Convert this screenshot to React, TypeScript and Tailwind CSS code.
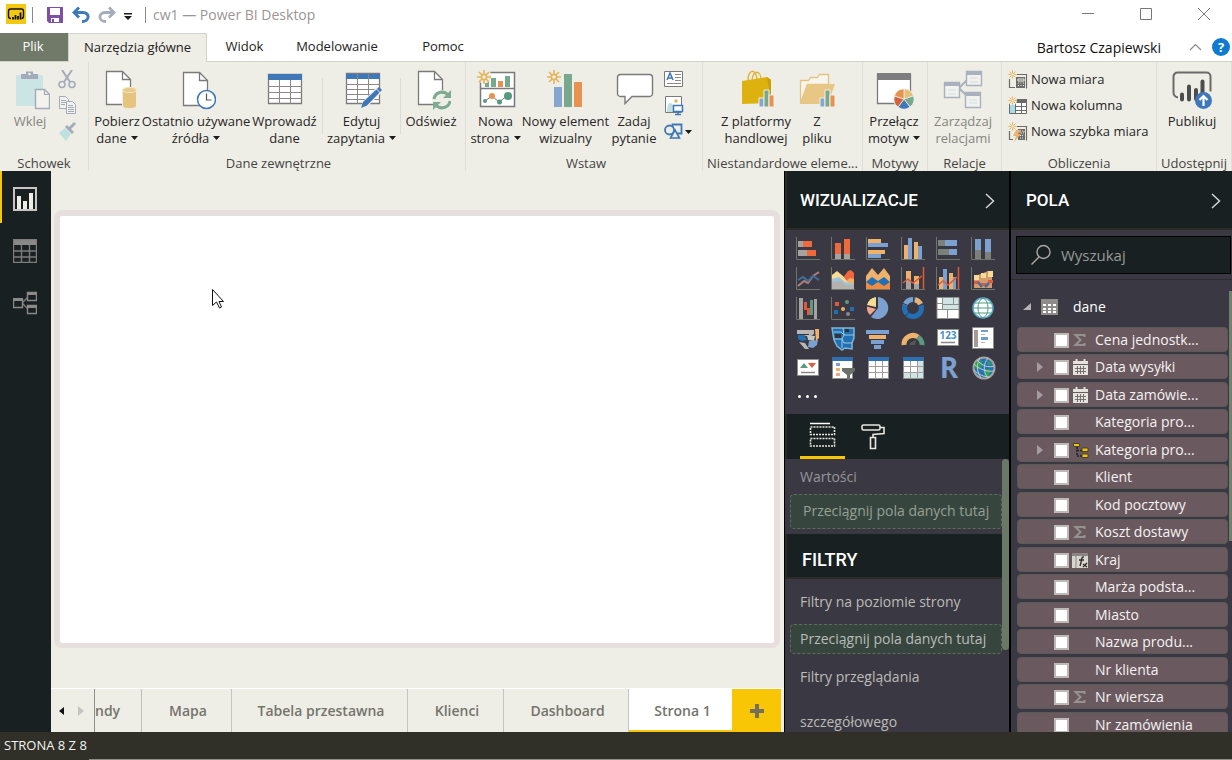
import React, { useState } from "react";

type IconProps = { children: React.ReactNode };

const BigIcon = ({ children }: IconProps) => (
  <svg width="40" height="40" viewBox="0 0 40 40" fill="none" className="mx-auto block shrink-0">
    {children}
  </svg>
);

const SmallIcon = ({ children }: IconProps) => (
  <svg width="20" height="20" viewBox="0 0 20 20" fill="none" className="shrink-0">
    {children}
  </svg>
);

const Caret = () => (
  <svg width="7" height="4" viewBox="0 0 7 4" className="mb-[3px] ml-1 inline-block">
    <path d="M0 0h7L3.5 4z" fill="#1c1c1c" />
  </svg>
);

const Star = ({ x, y }: { x: number; y: number }) => (
  <g transform={`translate(${x} ${y})`} stroke="#e3b55c" strokeWidth="1.6">
    <path d="M0-7V-3M0 3V7M-7 0H-3M3 0H7M-5-5L-2-2M2 2L5 5M5-5L2-2M-2 2L-5 5" />
    <circle r="2.6" fill="#f3efe2" />
  </g>
);

/* ribbon icons */

const PasteIcon = () => (
  <BigIcon>
    <path d="M6 5h27v31H6z" fill="#cbe5e4" />
    <path d="M11 4h5V1.500h7V4h5v5H11z" fill="#a3abba" />
    <circle cx="19.500" cy="4" r="1.300" fill="#efeee6" />
    <path d="M25.500 19.500h9l5 5v14h-14z" fill="#f3f2ec" stroke="#a3abba" strokeWidth="1.400" />
    <path d="M34.500 19.500v5h5" stroke="#a3abba" strokeWidth="1.200" />
  </BigIcon>
);

const GetDataIcon = () => (
  <BigIcon>
    <path d="M9.500 1.500h16l8 8v25h-24z" fill="#fff" stroke="#7a7a7a" strokeWidth="1.300" />
    <path d="M25.500 1.500v8h8" stroke="#7a7a7a" strokeWidth="1.300" />
    <path d="M25.500 20v16c0 3.500 14 3.500 14 0V20z" fill="#e6c37f" stroke="#efeee6" />
    <ellipse cx="32.500" cy="20" rx="7" ry="2.600" fill="#e9c98b" stroke="#f6e7c5" />
  </BigIcon>
);

const RecentIcon = () => (
  <BigIcon>
    <path d="M7.500 2.500h16l8 8v25h-24z" fill="#fff" stroke="#7a7a7a" strokeWidth="1.300" />
    <path d="M23.500 2.500v8h8" stroke="#7a7a7a" strokeWidth="1.300" />
    <circle cx="30.500" cy="29.500" r="9" fill="#fff" stroke="#3f7ab8" strokeWidth="1.500" />
    <path d="M30.500 23.500v6.500h5" stroke="#555" strokeWidth="1.200" />
  </BigIcon>
);

const TableIcon = () => (
  <BigIcon>
    <path d="M3.500 4.500h33v29h-33z" fill="#fff" stroke="#7a7a7a" strokeWidth="1.300" />
    <path d="M3 4h34v6H3z" fill="#3f78b8" />
    <path d="M14.500 10v24M25.500 10v24M3 16.500h34M3 22.500h34M3 28.500h34" stroke="#8d8787" />
  </BigIcon>
);

const EditQueriesIcon = () => (
  <BigIcon>
    <path d="M4.500 3.500h33v30h-33z" fill="#fff" stroke="#7a7a7a" strokeWidth="1.300" />
    <path d="M4 4h34v5H4z" fill="#3f78b8" />
    <path d="M15.500 4v30M26.500 4v30M4 14.500h34M4 19.500h34M4 24.500h34M4 29.500h34" stroke="#8d8787" />
    <path d="M38 19L22 35" stroke="#efeee6" strokeWidth="7" />
    <path d="M19 38l2-6L37 17l3 3L25 35.500z" fill="#3f78b8" />
    <path d="M34 18.500l4.500 4.500" stroke="#efeee6" />
  </BigIcon>
);

const RefreshIcon = () => (
  <BigIcon>
    <path d="M7.500 1.500h16l8 8v25h-24z" fill="#fff" stroke="#7a7a7a" strokeWidth="1.300" />
    <path d="M23.500 1.500v8h8" stroke="#7a7a7a" strokeWidth="1.300" />
    <circle cx="31" cy="30" r="10" fill="#efeee6" />
    <path d="M23 29a8 8 0 0 1 14-4M39 31a8 8 0 0 1-14 4" stroke="#7cab92" strokeWidth="3" />
    <path d="M40 20v8h-8zM22 40v-8h8z" fill="#7cab92" />
  </BigIcon>
);

const NewPageIcon = () => (
  <BigIcon>
    <path d="M4.500 2.500h34v34h-34z" fill="#fff" stroke="#7a7a7a" strokeWidth="1.500" />
    <path d="M4 18.500h35" stroke="#7a7a7a" strokeWidth="1.500" />
    <path d="M9 12h4v5H9zM15 8h5v9h-5zM29 6h5v11h-5z" fill="#78a88e" />
    <path d="M22 11h5v6h-5z" fill="#e8924f" />
    <path d="M9 31l7-5 7 6 8-6" stroke="#777" />
    <circle cx="9" cy="31" r="2" fill="#559a7e" />
    <circle cx="16" cy="26" r="3" fill="#e8924f" />
    <circle cx="23.500" cy="32" r="2.500" fill="#559a7e" />
    <circle cx="32" cy="26" r="4" fill="#559a7e" />
    <circle cx="8" cy="6" r="7.500" fill="#efeee6" />
    <Star x={8} y={7} />
  </BigIcon>
);

const NewVisualIcon = () => (
  <BigIcon>
    <path d="M8 17h8v20H8z" fill="#86a5cf" />
    <path d="M18 4h8v33h-8z" fill="#78a88e" />
    <path d="M28 12h8v25h-8z" fill="#e8924f" />
    <Star x={8} y={7} />
  </BigIcon>
);

const AskIcon = () => (
  <BigIcon>
    <path
      d="M6.500 4.500h29a3 3 0 0 1 3 3v16a3 3 0 0 1-3 3H18l-7 7v-7H6.500a3 3 0 0 1-3-3v-16a3 3 0 0 1 3-3z"
      fill="#fff"
      stroke="#7a7a7a"
      strokeWidth="1.400"
    />
  </BigIcon>
);

const MiniBars = () => (
  <>
    <path d="M23 28h5v9h-5z" fill="#86a5cf" stroke="#efeee6" />
    <path d="M28 20h5v17h-5z" fill="#78a88e" stroke="#efeee6" />
    <path d="M33 25h5v12h-5z" fill="#e8924f" stroke="#efeee6" />
  </>
);

const StoreIcon = () => (
  <BigIcon>
    <path d="M12 11c0-13 9-13 9 0M16 11c1-12 9-11 9-1" stroke="#dcb53c" strokeWidth="1.400" />
    <path d="M6 11l25-4 4 3v23L6 34z" fill="#ddb20f" />
    <path d="M31 7l4 3v20z" fill="#c99e0b" />
    <MiniBars />
  </BigIcon>
);

const FileIcon = () => (
  <BigIcon>
    <path d="M3.500 33V10.500h8l2-3h7l2-3h9v10h-21z" fill="#f8f5ec" stroke="#e6c385" strokeWidth="1.300" />
    <path d="M10 14h28l-7 20H3z" fill="#e8c684" />
    <MiniBars />
  </BigIcon>
);

const ThemeIcon = () => (
  <BigIcon>
    <path d="M3.500 4.500h33v29h-33z" fill="#fff" stroke="#7a7a7a" strokeWidth="1.300" />
    <path d="M3 3h34v7H3z" fill="#7d7d7d" />
    <circle cx="30" cy="29" r="10.500" fill="#efeee6" />
    <g transform="translate(30 29)" stroke="#efeee6" strokeWidth=".8">
      <path d="M0 0V-10A10 10 0 0 1 9.500-3z" fill="#e6bf78" />
      <path d="M0 0L9.500-3A10 10 0 0 1 6 8z" fill="#78a88e" />
      <path d="M0 0L6 8A10 10 0 0 1-6 8z" fill="#3f78b8" />
      <path d="M0 0L-6 8A10 10 0 0 1-9.500-3z" fill="#d0623f" />
      <path d="M0 0L-9.500-3A10 10 0 0 1 0-10z" fill="#e8924f" />
    </g>
  </BigIcon>
);

const RelationIcon = () => (
  <BigIcon>
    <path d="M16 18l8-8M16 18l8 8" stroke="#a9b0be" strokeWidth="2" />
    <path d="M1.500 12.500h15v15h-15zM23.500 1.500h15v14h-15zM22.500 22.500h15v15h-15z" fill="#f1f1ee" stroke="#a9b0be" strokeWidth="1.400" />
    <path d="M1 12h16v4H1zM23 1h16v4H23zM22 22h16v4H22z" fill="#a9b0be" />
    <path d="M5 20h8M5 24h8M27 8h8M27 12h8M26 30h8M26 33h8" stroke="#cfe0e2" />
  </BigIcon>
);

const PublishIcon = () => (
  <BigIcon>
    <path d="M6 27.500a5 5 0 0 1-4.500-5V6.500a4 4 0 0 1 4-4h29a4 4 0 0 1 4 4v15" stroke="#6a6a68" strokeWidth="2" />
    <path d="M10 24.500v5M17 16.500v13M24 20v9M30.500 11.500v12" stroke="#4d4d4b" strokeWidth="4" strokeLinecap="round" />
    <circle cx="31.500" cy="30.500" r="8.500" fill="#3f78b8" />
    <path d="M31.500 36v-9M27.500 30l4-4 4 4" stroke="#fff" strokeWidth="2.200" />
  </BigIcon>
);

/* icons of the visualizations list */

const Axis = () => <path d="M.5 1v22.500H24" stroke="#6d7568" />;

const vizIcons: { name: string; icon: React.ReactNode }[] = [
  {
    name: "Skumulowany wykres słupkowy",
    icon: (
      <>
        <Axis />
        <path d="M2 5h5v6H2zM2 14h9v6H2z" fill="#a6a2a0" />
        <path d="M7 5h9v6H7zM11 14h9v6h-9z" fill="#f0693a" />
      </>
    ),
  },
  {
    name: "Skumulowany wykres kolumnowy",
    icon: (
      <>
        <Axis />
        <path d="M4 18h6v5H4zM13 18h6v5h-6z" fill="#a6a2a0" />
        <path d="M4 7h6v11H4zM13 3h6v15h-6z" fill="#f0693a" />
      </>
    ),
  },
  {
    name: "Grupowany wykres słupkowy",
    icon: (
      <>
        <Axis />
        <path d="M2 3h13v4H2zM2 14h17v4H2z" fill="#edb26b" />
        <path d="M2 7h20v4H2zM2 18h13v4H2z" fill="#7ca0d0" />
      </>
    ),
  },
  {
    name: "Grupowany wykres kolumnowy",
    icon: (
      <>
        <Axis />
        <path d="M3 9h4v14H3zM13 6h4v17h-4z" fill="#edb26b" />
        <path d="M7 2h4v21H7zM17 10h4v13h-4z" fill="#7ca0d0" />
      </>
    ),
  },
  {
    name: "Wykres słupkowy 100%",
    icon: (
      <>
        <Axis />
        <path d="M2 4h7v6H2zM2 13h11v6H2z" fill="#7c807a" />
        <path d="M9 4h12v6H9zM13 13h8v6h-8z" fill="#7ca0d0" />
      </>
    ),
  },
  {
    name: "Wykres kolumnowy 100%",
    icon: (
      <>
        <Axis />
        <path d="M4 14h6v9H4zM14 16h6v7h-6z" fill="#7c807a" />
        <path d="M4 3h6v11H4zM14 3h6v13h-6z" fill="#7ca0d0" />
      </>
    ),
  },
  {
    name: "Wykres liniowy",
    icon: (
      <>
        <Axis />
        <path d="M2 20l6-5 4 2 5-7 6-4" stroke="#b07e78" strokeWidth="2" />
        <path d="M2 14l5-3 5 4 5-5 6 4" stroke="#3d6f9f" strokeWidth="2" />
      </>
    ),
  },
  {
    name: "Wykres warstwowy",
    icon: (
      <>
        <Axis />
        <path d="M11 13l6-8 3-1 3 3v16H11z" fill="#f0693a" />
        <path d="M14 16l5-4 4 1v8h-9z" fill="#edb26b" />
        <path d="M1 9l5-4 6 5 6 8v5H1z" fill="#f7dc93" />
        <path d="M1 13l7-2 6 5 9 2v5H1z" fill="#9cc4da" />
        <path d="M1 16l8-1 6 4 8 0v4H1z" fill="#b5b1af" />
      </>
    ),
  },
  {
    name: "Skumulowany wykres warstwowy",
    icon: (
      <>
        <path d="M0 10l6-8 6 7 6-7 6 8v8H0z" fill="#edb26b" />
        <path d="M0 16l6-5 6 4 6-4 6 5v7H0z" fill="#2170b5" />
        <path d="M0 16l6 4 6-4 6 4 6-4v7H0z" fill="#f08b43" />
        <path d="M0 23.500h24" stroke="#6d7568" />
      </>
    ),
  },
  {
    name: "Wykres liniowy i skumulowany kolumnowy",
    icon: (
      <>
        <Axis />
        <path d="M5 5h5v9H5zM13 10h5v8h-5z" fill="#edb26b" />
        <path d="M5 14h5v9H5zM13 18h5v5h-5z" fill="#a6a2a0" />
        <path d="M2 17l5-4 5 4 9-7M22.500 1v22" stroke="#e0593a" strokeWidth="1.500" />
      </>
    ),
  },
  {
    name: "Wykres liniowy i grupowany kolumnowy",
    icon: (
      <>
        <Axis />
        <path d="M3 11h4v12H3zM13 7h4v16h-4z" fill="#edb26b" />
        <path d="M7 3h4v20H7zM17 11h3v12h-3z" fill="#7ca0d0" />
        <path d="M2 19l5-4 5 4 9-8M22.500 1v22" stroke="#e0593a" strokeWidth="1.500" />
      </>
    ),
  },
  {
    name: "Wykres wstęgowy",
    icon: (
      <>
        <Axis />
        <path d="M3 10l7-2 7-3 4 0v17H3z" fill="#d59a70" />
        <path d="M3 9h5v5H3zM10 7h5v5h-5zM17 5h5v6h-5z" fill="#f7dc93" />
        <path d="M3 15h5v3H3zM10 17h5v3h-5zM17 14h5v3h-5z" fill="#e0593a" />
        <path d="M7 16l4 5M14 21l4-4" stroke="#3d6f9f" strokeWidth="2.500" />
      </>
    ),
  },
  {
    name: "Wykres kaskadowy",
    icon: (
      <>
        <Axis />
        <path d="M3 2h4v21H3zM18 3h3v20h-3z" fill="#a6a2a0" />
        <path d="M8 6h3v8H8zM11 12h3v7h-3z" fill="#e0593a" />
        <path d="M14 4h3v15h-3z" fill="#5b9a84" />
      </>
    ),
  },
  {
    name: "Wykres punktowy",
    icon: (
      <>
        <Axis />
        <path d="M4 6h4v4H4z" fill="#e0593a" />
        <path d="M3 14h4v4H3zM19 11h4v4h-4z" fill="#2170b5" />
        <circle cx="16" cy="6" r="2" fill="#5b9a84" />
        <circle cx="12" cy="13" r="2" fill="#edb26b" />
        <circle cx="17" cy="18" r="2" fill="#8a8a88" />
      </>
    ),
  },
  {
    name: "Wykres kołowy",
    icon: (
      <>
        <path d="M12 12V1A11 11 0 1 1 5 21z" fill="#7ca0d0" />
        <path d="M10 11V1A11 11 0 0 0 1 9z" fill="#f7dc93" />
        <path d="M10 13L1 10.500A10 10 0 0 0 4 19z" fill="#f0a58c" />
      </>
    ),
  },
  {
    name: "Wykres pierścieniowy",
    icon: (
      <>
        <circle cx="12" cy="12" r="8.500" stroke="#2170b5" strokeWidth="5" />
        <path d="M12 3.500A8.500 8.500 0 0 0 4 9" stroke="#7ca0d0" strokeWidth="5" />
        <path d="M14 3.700A8.500 8.500 0 0 1 19.500 8" stroke="#edb26b" strokeWidth="5" />
        <path d="M12.500 0v7M1 7l6 2.500M23 8l-6 2M4 20l5-4" stroke="#3a3943" />
      </>
    ),
  },
  {
    name: "Mapa drzewa",
    icon: (
      <>
        <path d="M1 1h22v22H1z" fill="#fff" />
        <path d="M7 2h9v11H7zM16 2h7v11h-7z" fill="#cfe4e4" />
        <path d="M1 1.500h22v21H1zM6.500 1v13M17.500 1v7M1 13.500h22M6 8.500h17M1 7.500h6M11.500 14v9" stroke="#8d8f8b" />
      </>
    ),
  },
  {
    name: "Mapa",
    icon: (
      <>
        <circle cx="12" cy="12" r="10" fill="#fff" stroke="#58abc9" strokeWidth="1.500" />
        <path d="M3 7h18M3 17h18M2 12h20" stroke="#4c9e84" />
        <ellipse cx="12" cy="12" rx="5" ry="9.500" stroke="#4c9e84" />
      </>
    ),
  },
  {
    name: "Kartogram",
    icon: (
      <>
        <path d="M1 4h17v4l-5 3-6-2-6-1z" fill="#b9b7b5" />
        <path d="M2 9h6l3 5-5 1-4-2z" fill="#2170b5" />
        <path d="M11 9l8 1-1 5-6-1z" fill="#c6c4c1" />
        <path d="M13 15l9-1-1 5-4 3-5-1z" fill="#7ca0d0" />
        <path d="M19 3h4v9l-3 3z" fill="#edb26b" />
        <path d="M3 16l6 1 4 6H9z" fill="#b9b7b5" />
        <path d="M1 8.500h12" stroke="#33343a" />
      </>
    ),
  },
  {
    name: "Mapa kształtów",
    icon: (
      <>
        <path d="M1 2h22v10l-2 5v6l-7-1-3 2-5-4-3-6z" fill="#2170b5" stroke="#7fb6d4" strokeWidth="1.500" />
        <path d="M3 6h7l3 3h10M3 13h8l2 4h8M12 2l1 7-2 4v9" stroke="#9cc8de" />
        <path d="M4 8h6v4H4zM14 3h4v3h-4z" fill="#33343a" />
      </>
    ),
  },
  {
    name: "Lejek",
    icon: (
      <>
        <path d="M0 4h23v4H0zM5 14h13v4H5zM8 19h7v4H8z" fill="#7ca0d0" />
        <path d="M3 9h17v4H3z" fill="#edb26b" />
      </>
    ),
  },
  {
    name: "Miernik",
    icon: (
      <>
        <path d="M3 19a9 9 0 0 1 14-8" stroke="#edb26b" strokeWidth="5" />
        <path d="M17 11a9 9 0 0 1 4 8" stroke="#5b9a84" strokeWidth="5" />
        <path d="M9 17l6-3-1 5H9z" fill="#555952" />
      </>
    ),
  },
  {
    name: "Karta",
    icon: (
      <>
        <path d="M1.500 3.500h21v16h-21z" fill="#fff" stroke="#8d8f8b" />
        <text x="12" y="13" textAnchor="middle" fontSize="10" fontWeight="700" fontFamily="Open Sans, sans-serif" fill="#4a8fc2">
          123
        </text>
        <path d="M5 16.500h14" stroke="#8c8484" strokeWidth="1.500" />
      </>
    ),
  },
  {
    name: "Karta wielowierszowa",
    icon: (
      <>
        <path d="M1.500 1.500h21v21h-21z" fill="#fff" stroke="#8d8f8b" />
        <path d="M3 4h4v17H3z" fill="#a59b9b" />
        <path d="M10 4h7v2h-7zM10 11h7v3h-7z" fill="#6f9fd0" />
        <path d="M10 8.500h4M10 16.500h4" stroke="#b9b7b5" />
      </>
    ),
  },
  {
    name: "Kluczowy wskaźnik wydajności",
    icon: (
      <>
        <path d="M1.500 3.500h21v16h-21z" fill="#fff" stroke="#8d8f8b" />
        <path d="M4 12l4-5 4 5z" fill="#5b9a84" />
        <path d="M12 7h8l-4 5z" fill="#e0593a" />
        <path d="M5 16.500h14" stroke="#8c8484" strokeWidth="1.500" />
      </>
    ),
  },
  {
    name: "Fragmentator",
    icon: (
      <>
        <path d="M1.500 1.500h20v21h-20z" fill="#fff" stroke="#8d8f8b" />
        <path d="M1 1h21v4H1z" fill="#2f6eb0" />
        <path d="M5 7h4v3H5z" fill="#7ca0d0" />
        <path d="M5 12h4v3H5z" fill="#edb26b" />
        <path d="M5 17h4v3H5z" fill="#f0a58c" />
        <path d="M11 12h13v3l-5 4v5h-3v-5l-5-4z" fill="#6b7068" />
      </>
    ),
  },
  {
    name: "Tabela",
    icon: (
      <>
        <path d="M2.500 1.500h20v21h-20z" fill="#fff" stroke="#8d8f8b" />
        <path d="M2 1h21v4H2z" fill="#2f6eb0" />
        <path d="M9.500 5v18M16.500 5v18M2 10.500h21M2 16.500h21" stroke="#a59b9b" />
      </>
    ),
  },
  {
    name: "Macierz",
    icon: (
      <>
        <path d="M2.500 1.500h20v21h-20z" fill="#fff" stroke="#8d8f8b" />
        <path d="M16 5h6v17H3v-5h13z" fill="#cfe4e4" />
        <path d="M2 1h21v4H2z" fill="#2f6eb0" />
        <path d="M9.500 5v18M16.500 5v18M2 10.500h21M2 16.500h21" stroke="#a59b9b" />
      </>
    ),
  },
  {
    name: "Wizualizacja skryptu języka R",
    icon: (
      <text x="13" y="22" textAnchor="middle" fontSize="28" fontWeight="700" fontFamily="Open Sans, sans-serif" fill="#7ca0d0">
        R
      </text>
    ),
  },
  {
    name: "Mapa ArcGIS",
    icon: (
      <>
        <circle cx="13" cy="12" r="10.500" fill="#2872b8" stroke="#a6a2a0" strokeWidth="2" />
        <path d="M5 6l5-2 2 5-4 4-5-1zM14 13l6 1-2 6-5 2zM16 4l5 4-4 2z" fill="#2fa05a" />
        <path d="M3 8c6 6 14 8 20 7M6 4c5 6 12 8 17 6M3 14c5 5 10 7 16 7M9 2c-4 6-3 14 1 20M17 2c-5 6-5 14 0 20" stroke="#c4cccb" />
      </>
    ),
  },
];

type FieldIcon = "sigma" | "date" | "tree" | "geo";
type Field = { label: string; icon?: FieldIcon; nested?: boolean };

const fields: Field[] = [
  { label: "Cena jednostk...", icon: "sigma" },
  { label: "Data wysyłki", icon: "date", nested: true },
  { label: "Data zamówie...", icon: "date", nested: true },
  { label: "Kategoria pro..." },
  { label: "Kategoria pro...", icon: "tree", nested: true },
  { label: "Klient" },
  { label: "Kod pocztowy" },
  { label: "Koszt dostawy", icon: "sigma" },
  { label: "Kraj", icon: "geo" },
  { label: "Marża podsta..." },
  { label: "Miasto" },
  { label: "Nazwa produ..." },
  { label: "Nr klienta" },
  { label: "Nr wiersza", icon: "sigma" },
  { label: "Nr zamówienia" },
];

const fieldIcons: Record<FieldIcon, React.ReactNode> = {
  sigma: <path d="M12.500 5V3H3.500l5 5-5 5h9v-2" stroke="#97918f" strokeWidth="2" />,
  date: (
    <>
      <path d="M1 2h15v14H1z" fill="#e4e2dc" />
      <path d="M1 5.500h15" stroke="#6b5a60" />
      <path d="M4.500 0v3M12.500 0v3" stroke="#e4e2dc" strokeWidth="2" />
      <path d="M3 9.500h11M3 12.500h11M5.500 7v8M8.500 7v8M11.500 7v8" stroke="#77706f" />
    </>
  ),
  tree: (
    <>
      <path d="M5 5v9h5M5 8.500h5" stroke="#2f3029" strokeDasharray="2 1" strokeWidth="2" />
      <path d="M1.500 1.500h6v3h-6zM10 6h6v3.500h-6zM10 12h6v3.500h-6z" fill="#f5c20a" stroke="#4a4330" />
    </>
  ),
  geo: (
    <>
      <path d="M0 1h16v15H0z" fill="#d8d6cf" />
      <path d="M0 1h16v3H0z" fill="#8b8588" />
      <path d="M4 4v12" stroke="#8b8588" />
      <path d="M12 5c-3-1-2 4-4 9M7 8h5M11 12l4 3M15 11l-4 4" stroke="#2f3029" strokeWidth="1.400" />
    </>
  ),
};

type RibbonButtonProps = {
  icon: React.ReactNode;
  lines: string[];
  width: string;
  menu?: boolean;
  muted?: boolean;
};

const RibbonButton = ({ icon, lines, width, menu, muted }: RibbonButtonProps) => (
  <button className={`flex shrink-0 flex-col items-center ${width} ${muted ? "text-[#85857f]" : "text-[#262626]"}`}>
    {icon}
    <span className="mt-[3px] flex flex-col items-center leading-[17px] whitespace-nowrap">
      {lines.map((line, i) => (
        <span key={line}>
          {line}
          {menu && i === lines.length - 1 && <Caret />}
        </span>
      ))}
    </span>
  </button>
);

type GroupProps = { label: string; className: string; children: React.ReactNode };

const RibbonGroup = ({ label, className, children }: GroupProps) => (
  <section className={`flex flex-col border-r border-[#e3dcdb] pt-2 ${className}`}>
    <div className="flex flex-1">{children}</div>
    <h2 className="text-center leading-4 whitespace-nowrap text-[#444]">{label}</h2>
  </section>
);

const Divider = () => <div className="mx-[3px] mt-2 h-14 w-px shrink-0 bg-[#dedad6]" />;

const Chevron = () => (
  <svg width="10" height="16" viewBox="0 0 10 16" fill="none">
    <path d="M1 1l7.500 7L1 15" stroke="#d5d5d2" strokeWidth="1.500" />
  </svg>
);

const TitleBar = () => (
  <header className="flex h-[33px] shrink-0 items-start bg-white pl-1.5">
    <svg width="20" height="20" viewBox="0 0 20 20" fill="none" className="mt-1">
      <path d="M0 0h20v20H0z" fill="#f2c811" />
      <path d="M5 14.500c-2 0-2.500-1-2.500-2.500V7.500c0-1.500.5-2.500 2-2.500h11c1.500 0 2 1 2 2.500V12c0 1.500-.5 2.500-2 2.500" stroke="#111" strokeWidth="1.400" />
      <path d="M7 13v2.500M9.500 11v4.500M12 12v3.500M14.500 8.500v7" stroke="#111" strokeWidth="1.800" />
    </svg>
    <div className="mt-[7px] ml-1.5 h-4 w-px bg-[#8a8a8a]" />
    <div className="mt-1.5 ml-[13px] flex gap-2">
      <button aria-label="Zapisz">
        <svg width="18" height="18" viewBox="0 0 18 18" fill="none">
          <path d="M1 1h16v16H3l-2-2z" fill="#7f4fa5" />
          <path d="M4 2h10v7H4zM5 12h8v4H5z" fill="#fff" />
          <path d="M6 13h2v3H6z" fill="#7f4fa5" />
        </svg>
      </button>
      <button aria-label="Cofnij">
        <svg width="18" height="18" viewBox="0 0 18 18" fill="none">
          <path d="M2 6.500h9c7 0 7 9-1 9" stroke="#3f7ab8" strokeWidth="3" />
          <path d="M7 1.500l-5 5 5 5" stroke="#3f7ab8" strokeWidth="3" />
        </svg>
      </button>
      <button aria-label="Ponów">
        <svg width="18" height="18" viewBox="0 0 18 18" fill="none">
          <path d="M16 6.500H7c-7 0-7 9 1 9" stroke="#a5adba" strokeWidth="2.800" />
          <path d="M11 1.500l5 5-5 5" stroke="#a5adba" strokeWidth="2.800" />
        </svg>
      </button>
      <button aria-label="Dostosuj pasek narzędzi">
        <svg width="8" height="18" viewBox="0 0 8 18">
          <path d="M0 7h8v1.500H0zM0 10h8l-4 4z" fill="#1c1c1c" />
        </svg>
      </button>
    </div>
    <div className="mt-[7px] ml-[13px] h-4 w-px bg-[#8a8a8a]" />
    <h1 className="mt-1 ml-[7px] text-[14px] leading-[22px] text-[#999693]">cw1 — Power BI Desktop</h1>
    <div className="mt-[7px] mr-[22px] ml-auto flex gap-[46px] text-[#777]">
      <button aria-label="Minimalizuj">
        <svg width="12" height="14" viewBox="0 0 12 14" fill="none" stroke="currentColor">
          <path d="M0 6.500h12" />
        </svg>
      </button>
      <button aria-label="Maksymalizuj">
        <svg width="12" height="14" viewBox="0 0 12 14" fill="none" stroke="currentColor">
          <path d="M.5 1.500h11v11H.5z" />
        </svg>
      </button>
      <button aria-label="Zamknij">
        <svg width="12" height="14" viewBox="0 0 12 14" fill="none" stroke="currentColor">
          <path d="M0 1l12 12M12 1L0 13" />
        </svg>
      </button>
    </div>
  </header>
);

const MenuTabs = () => (
  <nav className="flex h-[29px] shrink-0 items-stretch border-b border-[#cfd6c8] bg-white text-[13px] text-[#222]">
    <button className="w-[68px] bg-[#717a68] pr-[2px] text-white">Plik</button>
    <button className="-mb-px w-[139px] border border-b-0 border-[#cfd6c8] bg-[#efeee6]">Narzędzia główne</button>
    <button className="w-[75px]">Widok</button>
    <button className="w-[110px]">Modelowanie</button>
    <button className="w-[102px]">Pomoc</button>
    <div className="mr-[2px] ml-auto flex items-center">
      <span className="text-[14px] text-[#111]">Bartosz Czapiewski</span>
      <button aria-label="Zwiń wstążkę" className="ml-7">
        <svg width="13" height="8" viewBox="0 0 13 8" fill="none">
          <path d="M1 7l5.500-5.500L12 7" stroke="#8e8a8a" strokeWidth="1.200" />
        </svg>
      </button>
      <button className="ml-2.5 h-[18px] w-[18px] rounded-full bg-[#0f7bd0] text-[13px] leading-[18px] font-bold text-white">?</button>
    </div>
  </nav>
);

const Ribbon = () => (
  <div className="flex h-[109px] shrink-0 bg-[#efeee6] text-[13px]">
    <RibbonGroup label="Schowek" className="w-[89px]">
      <RibbonButton icon={<PasteIcon />} lines={["Wklej"]} width="ml-[3px] w-[54px]" muted />
      <div className="flex flex-col gap-[6px]">
        <button aria-label="Wytnij">
          <SmallIcon>
            <path d="M5 0l8 12M15 0L7 12" stroke="#a3abba" strokeWidth="2" />
            <circle cx="5" cy="14.500" r="3" stroke="#a3abba" strokeWidth="1.600" />
            <circle cx="15" cy="14.500" r="3" stroke="#a3abba" strokeWidth="1.600" />
          </SmallIcon>
        </button>
        <button aria-label="Kopiuj">
          <SmallIcon>
            <path d="M2.500.5h6l3 3v9h-9z" fill="#f3f2ec" stroke="#a3abba" />
            <path d="M9.500 5.500h6l3 3v9h-9z" fill="#f3f2ec" stroke="#a3abba" />
            <path d="M4 4.500h5M4 6.500h5M4 8.500h4M11 9.500h5M11 11.500h6M11 13.500h6M11 15.500h6" stroke="#a3abba" />
          </SmallIcon>
        </button>
        <button aria-label="Malarz formatów">
          <SmallIcon>
            <path d="M2 11l6-5 6 6-5 7z" fill="#bfe0df" />
            <path d="M8 5l7 7 2-2-3-3 5-5-2-2-5 5-2-2z" fill="#a3abba" />
          </SmallIcon>
        </button>
      </div>
    </RibbonGroup>

    <RibbonGroup label="Dane zewnętrzne" className="w-[377px] pl-[3px]">
      <RibbonButton icon={<GetDataIcon />} lines={["Pobierz", "dane"]} width="w-[50px]" menu />
      <RibbonButton icon={<RecentIcon />} lines={["Ostatnio używane", "źródła"]} width="w-[108px]" menu />
      <RibbonButton icon={<TableIcon />} lines={["Wprowadź", "dane"]} width="w-[69px]" />
      <Divider />
      <RibbonButton icon={<EditQueriesIcon />} lines={["Edytuj", "zapytania"]} width="w-[71px]" menu />
      <Divider />
      <RibbonButton icon={<RefreshIcon />} lines={["Odśwież"]} width="w-[54px]" />
    </RibbonGroup>

    <RibbonGroup label="Wstaw" className="w-[237px] pl-1">
      <RibbonButton icon={<NewPageIcon />} lines={["Nowa", "strona"]} width="w-[51px]" menu />
      <RibbonButton icon={<NewVisualIcon />} lines={["Nowy element", "wizualny"]} width="w-[89px]" />
      <RibbonButton icon={<AskIcon />} lines={["Zadaj", "pytanie"]} width="w-[48px]" />
      <div className="ml-[6px] flex flex-col gap-[6px]">
        <button aria-label="Pole tekstowe">
          <SmallIcon>
            <path d="M.5 1.500h18v15H.5z" fill="#fff" stroke="#7a7a7a" />
            <path d="M3 10l3-7 3 7M4 8h4" stroke="#3f78b8" strokeWidth="1.500" />
            <path d="M11 4.500h6M11 7.500h6M11 10.500h6M3 13.500h14" stroke="#8d8787" />
          </SmallIcon>
        </button>
        <button aria-label="Obraz">
          <SmallIcon>
            <path d="M1.500.5h16v16h-16z" fill="#fff" stroke="#7a7a7a" />
            <path d="M3 16c0-12 6-12 8 0z" fill="#bfe0df" />
            <circle cx="12" cy="5" r="1.800" fill="#e3b55c" />
            <path d="M9.500 9.500h9v6h-9zM11 18.500h6M14 15.500v3" fill="#fff" stroke="#3f78b8" strokeWidth="1.500" />
          </SmallIcon>
        </button>
        <button aria-label="Kształty" className="flex items-center gap-[1px]">
          <SmallIcon>
            <path d="M8.500 2.500h9v9h-9z" stroke="#3f78b8" strokeWidth="1.800" />
            <circle cx="5.500" cy="8" r="4.500" fill="#efeee6" stroke="#3f78b8" strokeWidth="1.800" />
            <path d="M11 8l4.500 8h-9z" fill="#efeee6" stroke="#3f78b8" strokeWidth="1.600" />
          </SmallIcon>
          <svg width="7" height="4" viewBox="0 0 7 4">
            <path d="M0 0h7L3.500 4z" fill="#1c1c1c" />
          </svg>
        </button>
      </div>
    </RibbonGroup>

    <RibbonGroup label="Niestandardowe eleme..." className="w-[160px] pl-[15px] [&>h2]:-ml-[15px]">
      <RibbonButton icon={<StoreIcon />} lines={["Z platformy", "handlowej"]} width="w-[76px]" />
      <RibbonButton icon={<FileIcon />} lines={["Z", "pliku"]} width="w-[46px]" />
    </RibbonGroup>

    <RibbonGroup label="Motywy" className="w-[65px]">
      <RibbonButton icon={<ThemeIcon />} lines={["Przełącz", "motyw"]} width="w-[62px]" menu />
    </RibbonGroup>

    <RibbonGroup label="Relacje" className="w-[74px]">
      <RibbonButton icon={<RelationIcon />} lines={["Zarządzaj", "relacjami"]} width="w-[70px]" muted />
    </RibbonGroup>

    <RibbonGroup label="Obliczenia" className="w-[155px]">
      <div className="flex flex-col gap-[6px] pl-[6px]">
        <button className="flex h-5 items-center gap-[3px] whitespace-nowrap text-[#262626]">
          <SmallIcon>
            <path d="M9 4.500h9.500v14M1.500 9v8.500H7" stroke="#6a6a68" strokeWidth="1.200" />
            <path d="M8 7h9v11H8z" fill="#6d6d6b" />
            <path d="M10 9h6v2h-6zM10 13h1M12.500 13h1M15 13h1M10 15.500h1M12.500 15.500h1M15 15.500h1" stroke="#efeee6" />
            <g transform="translate(4.500 4.500) scale(.6)">
              <Star x={0} y={0} />
            </g>
          </SmallIcon>
          Nowa miara
        </button>
        <button className="flex h-5 items-center gap-[3px] whitespace-nowrap text-[#262626]">
          <SmallIcon>
            <path d="M1.500 3.500h17v14h-17z" fill="#fff" stroke="#6a6a68" />
            <path d="M8 3h11v4H8z" fill="#6a6a68" />
            <path d="M2 9h5v8H2z" fill="#a9dbe8" />
            <path d="M7.500 7v11M13.500 7v11M7 10.500h12M7 14.500h12" stroke="#6a6a68" />
            <circle cx="4.500" cy="4.500" r="4.500" fill="#efeee6" />
            <g transform="translate(4.500 4.500) scale(.6)">
              <Star x={0} y={0} />
            </g>
          </SmallIcon>
          Nowa kolumna
        </button>
        <button className="flex h-5 items-center gap-[3px] whitespace-nowrap text-[#262626]">
          <SmallIcon>
            <path d="M9 4.500h9.500v14M1.500 9v8.500H5" stroke="#6a6a68" strokeWidth="1.200" />
            <path d="M10 7h7v11h-7z" fill="#6d6d6b" />
            <path d="M12 9h4v2h-4zM12 13.500h4M12 16h4" stroke="#efeee6" strokeDasharray="1 1" />
            <path d="M8 8h5l-3 4h3l-7 8 2-6H5z" fill="#edb26b" />
            <g transform="translate(4.500 4.500) scale(.6)">
              <Star x={0} y={0} />
            </g>
          </SmallIcon>
          Nowa szybka miara
        </button>
      </div>
    </RibbonGroup>

    <RibbonGroup label="Udostępnij" className="flex-1">
      <RibbonButton icon={<PublishIcon />} lines={["Publikuj"]} width="w-[70px]" />
    </RibbonGroup>
  </div>
);

const ViewRail = () => (
  <nav className="flex w-[51px] shrink-0 flex-col bg-[#182021]">
    <button aria-label="Raport" className="flex h-[52px] items-center border-l-2 border-[#f9c606] pt-1 pl-[11px]">
      <svg width="24" height="24" viewBox="0 0 24 24" fill="none">
        <path d="M1 1h22v22H1z" stroke="#c9c6c4" strokeWidth="2" />
        <path d="M4 9h4v13H4zM10 14h4v8h-4zM16 6h4v16h-4z" fill="#efeee6" />
      </svg>
    </button>
    <button aria-label="Dane" className="flex h-[54px] items-center pt-[2px] pl-[13px]">
      <svg width="24" height="24" viewBox="0 0 24 24" fill="none">
        <path d="M0 0h24v6H0z" fill="#8c8989" />
        <path d="M.5.5h23v23H.5zM8.500 6v18M16.500 6v18M0 12h24M0 18h24" stroke="#7f7b7b" strokeWidth="1.400" />
      </svg>
    </button>
    <button aria-label="Relacje" className="flex h-[52px] items-center pl-[13px]">
      <svg width="24" height="24" viewBox="0 0 24 24" fill="none">
        <path d="M9 12l6-6M9 12l6 6" stroke="#7f7b7b" strokeWidth="1.400" />
        <path d="M.5 8.500h9v8h-9zM14.500 1.500h9v8h-9zM14.500 14.500h9v8h-9z" fill="#182021" stroke="#8c8989" strokeWidth="1.400" />
        <path d="M0 7h10v3H0zM14 1h10v3H14zM14 14h10v3H14z" fill="#8c8989" />
      </svg>
    </button>
  </nav>
);

const pages = [
  { label: "Mapa", width: "w-[90px]" },
  { label: "Tabela przestawna", width: "w-[176px]" },
  { label: "Klienci", width: "w-[96px]" },
  { label: "Dashboard", width: "w-[125px]" },
];

const Canvas = () => (
  <main className="flex min-w-0 flex-1 flex-col bg-[#efeee6]">
    <div className="flex min-h-0 flex-1 pt-[39px] pr-1 pb-10 pl-[3px]">
      <div className="relative flex-1 rounded-lg border-6 border-b-[5px] border-[#e6dfde] bg-white">
        <svg width="12" height="20" viewBox="0 0 12 20" className="absolute top-[73px] left-[152px]">
          <path d="M.5.5v16l4-3.500 3 6 2-1-2.500-5.500h4.500z" fill="#fff" stroke="#111" />
        </svg>
      </div>
    </div>
    <div className="flex h-11 shrink-0 border-t border-white pr-[3px] text-[14px] font-semibold text-[#74746c]">
      <div className="flex w-[43px] shrink-0 items-center gap-[14px] pl-2">
        <button aria-label="Poprzednia strona">
          <svg width="5" height="8" viewBox="0 0 5 8">
            <path d="M5 0v8L0 4z" fill="#111" />
          </svg>
        </button>
        <button aria-label="Następna strona">
          <svg width="6" height="10" viewBox="0 0 6 10">
            <path d="M0 0v10l6-5z" fill="#c5c5be" />
          </svg>
        </button>
      </div>
      <button className="w-12 shrink-0 border-x border-[#bdbdb9] border-l-[#8e8e8c] text-left">ndy</button>
      {pages.map((page) => (
        <button key={page.label} className={`border-r border-[#c4c4c0] pl-[3px] ${page.width}`}>
          {page.label}
        </button>
      ))}
      <button className="flex-1 border-b-2 border-[#f9c606] bg-white pt-[2px] pl-1">Strona 1</button>
      <button aria-label="Nowa strona" className="flex w-[49px] items-center justify-center bg-[#f9c606]">
        <svg width="14" height="14" viewBox="0 0 14 14">
          <path d="M5 0h4v5h5v4H9v5H5V9H0V5h5z" fill="#74705a" />
        </svg>
      </button>
    </div>
  </main>
);

const Visualizations = () => (
  <aside className="flex w-[227px] shrink-0 flex-col overflow-hidden border-r-2 border-l border-black bg-[#3a3943]">
    <header className="flex h-[59px] shrink-0 items-center justify-between border-b-2 border-l-2 border-[#2c2b26] bg-[#182021] pt-[2px] pr-[14px] pl-[13px]">
      <h2 className="font-[Roboto,sans-serif] text-[17px] font-medium text-white">WIZUALIZACJE</h2>
      <button aria-label="Zwiń wizualizacje">
        <Chevron />
      </button>
    </header>
    <div className="grid shrink-0 auto-rows-[30px] grid-cols-[repeat(6,35px)] pt-[6px] pl-[11px]">
      {vizIcons.map((viz) => (
        <button key={viz.name} aria-label={viz.name} className="h-6 w-6">
          <svg width="25" height="25" viewBox="0 0 25 25" fill="none" className="overflow-visible">
            {viz.icon}
          </svg>
        </button>
      ))}
    </div>
    <button aria-label="Więcej wizualizacji" className="ml-[13px] flex h-7 shrink-0 items-center gap-[5px] pb-2">
      <span className="h-[3px] w-[3px] rounded-full bg-white" />
      <span className="h-[3px] w-[3px] rounded-full bg-white" />
      <span className="h-[3px] w-[3px] rounded-full bg-white" />
    </button>
    <div className="flex h-[45px] shrink-0 border-l-2 border-[#2c2b26] bg-[#182021] pl-[13px]">
      <button aria-label="Pola" className="w-[45px] border-b-3 border-[#f9c606] pl-[9px]">
        <svg width="27" height="26" viewBox="0 0 27 26" fill="none" stroke="#e8e6e0">
          <path d="M1 1.500h20" stroke="#fff" strokeWidth="1.500" />
          <path d="M1.500 5h24v7.500h-24zM1.500 16.500h24V24h-24z" strokeWidth="1.600" strokeDasharray="2 1" />
        </svg>
      </button>
      <button aria-label="Formatuj" className="ml-4">
        <svg width="24" height="26" viewBox="0 0 24 26" fill="none" stroke="#e8e6e0" strokeWidth="1.600">
          <rect x="1" y="1" width="18" height="5" rx="1.500" />
          <path d="M19 3.500h4V9.500l-11 1v3M9.500 13.500h5v11h-5z" />
        </svg>
      </button>
    </div>
    <div className="relative min-h-0 flex-1 overflow-hidden text-[14px] text-[#bcbbb6]">
      <h3 className="mt-2 ml-[15px] leading-5 text-[#96959a]">Wartości</h3>
      <div className="mt-[7px] mr-[7px] ml-[5px] h-[35px] rounded border border-dashed border-[#626a60] bg-[#36463f] pl-3 leading-8 whitespace-nowrap text-[#97a096]">
        Przeciągnij pola danych tutaj
      </div>
      <h2 className="mt-[5px] mr-[7px] flex h-[45px] items-center border-b-2 border-l-2 border-[#2c2b26] bg-[#182021] pt-2 pl-[15px] font-[Roboto,sans-serif] text-[18px] font-medium text-white">
        FILTRY
      </h2>
      <h3 className="mt-[13px] ml-[15px] leading-5">Filtry na poziomie strony</h3>
      <div className="mt-3 mr-[7px] ml-[5px] h-[30px] rounded border border-dashed border-[#626a60] bg-[#36463f] pl-[9px] leading-7 whitespace-nowrap">
        Przeciągnij pola danych tutaj
      </div>
      <h3 className="ml-[15px] leading-[45px]">
        Filtry przeglądania
        <br />
        szczegółowego
      </h3>
      <div className="absolute top-0 right-0 h-[191px] w-[7px] rounded bg-[#6a7867]" />
    </div>
  </aside>
);

const FieldRow = ({ field, id }: { field: Field; id: string }) => (
  <li className="flex h-[25px] items-center rounded-sm border border-[#5c5a56] bg-[#6b5960] pl-[18px] odd:mb-[2px] even:mb-[3px]">
    <svg width="8" height="10" viewBox="0 0 8 10" className="mr-[10px] shrink-0">
      {field.nested && <path d="M1 0v10l6-5z" fill="#a49ca0" />}
    </svg>
    <input
      id={id}
      type="checkbox"
      className="mt-[2px] h-[15px] w-[15px] shrink-0 appearance-none border-2 border-[#bdb9b7] bg-white checked:bg-[#f9c606]"
    />
    <svg width="17" height="17" viewBox="0 0 17 17" fill="none" className="mt-[2px] ml-[3px] shrink-0">
      {field.icon && fieldIcons[field.icon]}
    </svg>
    <label htmlFor={id} className="ml-[6px] text-[14px] leading-4 whitespace-nowrap text-[#f4f3f1]">
      {field.label}
    </label>
  </li>
);

const FieldsPane = () => {
  const [query, setQuery] = useState<string>("");

  return (
    <aside className="relative flex w-[221px] shrink-0 flex-col overflow-hidden bg-[#3a3943]">
      <header className="flex h-[59px] shrink-0 items-center justify-between border-b-2 border-[#2c2b26] bg-[#182021] pt-[2px] pr-[11px] pl-[15px]">
        <h2 className="font-[Roboto,sans-serif] text-[17px] font-medium text-white">POLA</h2>
        <button aria-label="Zwiń pola">
          <Chevron />
        </button>
      </header>
      <label className="mt-[6px] mr-[1px] ml-[5px] flex h-[38px] shrink-0 items-center border border-black bg-[#182021] pl-[13px]">
        <svg width="22" height="22" viewBox="0 0 22 22" fill="none" stroke="#aaa8a6" strokeWidth="1.400" className="shrink-0">
          <circle cx="13.500" cy="8" r="6.500" />
          <path d="M9 13l-7.500 7.500" />
        </svg>
        <input
          type="text"
          aria-label="Wyszukaj"
          placeholder="Wyszukaj"
          value={query}
          onChange={(e) => setQuery(e.target.value)}
          className="ml-[9px] w-full min-w-0 bg-transparent text-[15px] text-white outline-none placeholder:text-[#999a98]"
        />
      </label>
      <div className="mt-[5px] flex h-12 shrink-0 items-center border-t border-[#2c2b31] pt-[6px] pl-3">
        <svg width="8" height="7" viewBox="0 0 8 7">
          <path d="M8 0v7H0z" fill="#b5b2b0" />
        </svg>
        <svg width="17" height="16" viewBox="0 0 17 16" className="ml-[10px]">
          <path d="M0 0h17v16H0z" fill="#8f8c8a" />
          <path d="M2 5h3v2H2zM7 5h3v2H7zM12 5h3v2h-3zM2 9h3v2H2zM7 9h3v2H7zM12 9h3v2h-3zM2 12h3v2H2zM7 12h3v2H7zM12 12h3v2h-3z" fill="#fff" />
        </svg>
        <span className="ml-[15px] text-[14px] text-white">dane</span>
      </div>
      <ul className="mr-1 ml-[6px] min-h-0 flex-1 overflow-hidden">
        {fields
          .filter((f) => f.label.toLowerCase().includes(query.toLowerCase()))
          .map((f, i) => (
            <FieldRow key={i} field={f} id={`field-${i}`} />
          ))}
      </ul>
      <div className="absolute top-[120px] right-0 h-[250px] w-[3px] bg-[#74806e]" />
    </aside>
  );
};

const App: React.FC = () => {
  return (
    <div className="flex h-screen flex-col overflow-hidden bg-[#302f28] font-['Open_Sans',sans-serif]">
      <TitleBar />
      <MenuTabs />
      <Ribbon />
      <div className="flex min-h-0 flex-1">
        <ViewRail />
        <Canvas />
        <Visualizations />
        <FieldsPane />
      </div>
      <footer className="h-[27px] shrink-0 pl-1 text-[13px] leading-[27px] text-[#f4f3f1]">STRONA 8 Z 8</footer>
      <div className="ml-[89px] h-px shrink-0 bg-[#8f8d88]" />
    </div>
  );
};

export default App;
